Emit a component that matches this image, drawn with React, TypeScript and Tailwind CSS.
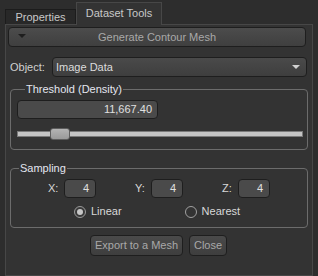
export default function App() {
  return (
    <div className="flex h-[276px] w-[318px] flex-col overflow-hidden bg-[#2d2d2d] text-[11px] leading-[13px] text-[#c4c4c4] [font-family:'Liberation_Sans',Arial,sans-serif]">
      {/* tabs */}
      <div className="flex h-[24px] items-end pl-[5px]">
        <div className="flex h-[15px] w-[71px] items-center justify-center border border-b-0 border-[#1c1c1c] bg-[#282828] text-[#c8c8c8]">
          Properties
        </div>
        <div className="relative z-10 -mb-px flex h-[23px] w-[86px] items-center justify-center border border-b-0 border-[#474747] bg-[#333333] pb-[2px] text-[#c8c8c8]">
          Dataset Tools
        </div>
      </div>

      {/* panel */}
      <div className="ml-[5px] flex w-[308px] flex-1 flex-col border border-[#474747] bg-[#333333] px-[2px] pt-[2px]">
        <button className="relative flex h-[20px] w-[298px] items-center justify-center rounded-[4px] border border-[#1e1e1e] bg-gradient-to-b from-[#4c4c4c] to-[#3f3f3f] text-[#a9a9a9]">
          <span className="absolute left-[9px] top-[6px] h-0 w-0 border-x-[4px] border-t-[4px] border-x-transparent border-t-[#1e1e1e]" />
          Generate Contour Mesh
        </button>

        <div className="mt-[10px] flex items-center pl-[2px]">
          <span className="w-[42px] text-[#d0d0d0]">Object:</span>
          <div className="flex h-[20px] w-[255px] items-center justify-between rounded-[4px] border border-[#1e1e1e] bg-gradient-to-b from-[#4a4a4a] to-[#3e3e3e] pl-[3px] pr-[6px] text-[#dcdcdc]">
            Image Data
            <span className="h-0 w-0 border-x-[4px] border-t-[4px] border-x-transparent border-t-[#d0d0d0]" />
          </div>
        </div>

        {/* threshold */}
        <fieldset className="ml-[2px] mt-[6px] w-[298px] rounded-[4px] border border-[#6c6c6c] pb-[9px] pl-[6px] pr-[4px]">
          <legend className="ml-[8px] px-[1px] leading-[12px] text-[#e4e6f0]">Threshold (Density)</legend>
          <div className="mt-[5px] flex h-[19px] w-[141px] items-center justify-end rounded-[4px] border border-[#1e1e1e] bg-[#4a4a4a] pr-[5px] text-[#e0e0e0]">
            11,667.40
          </div>
          <div className="relative mt-[9px] flex h-[12px] items-center">
            <div className="h-[6px] w-full border border-[#7a7a7a] bg-[#c4c4c4]" />
            <div className="absolute left-[33px] top-0 h-[12px] w-[20px] rounded-[3px] border border-[#5e5e5e] bg-gradient-to-b from-[#b4b4b4] to-[#9a9a9a]" />
          </div>
        </fieldset>

        {/* sampling */}
        <fieldset className="ml-[2px] mt-[12px] w-[298px] rounded-[4px] border border-[#6c6c6c] pb-[9px]">
          <legend className="ml-[8px] px-[1px] leading-[12px] text-[#e4e6f0]">Sampling</legend>
          <div className="mt-[5px] flex items-center gap-[39px] pl-[37px]">
            {["X", "Y", "Z"].map((axis) => (
              <div key={axis} className="flex items-center gap-[6px]">
                <span className="w-[10px] text-[#d8d8d8]">{axis}:</span>
                <div className="flex h-[19px] w-[32px] items-center justify-end rounded-[4px] border border-[#1e1e1e] bg-[#4a4a4a] pr-[6px] text-[#e0e0e0]">
                  4
                </div>
              </div>
            ))}
          </div>
          <div className="mt-[7px] flex items-center pl-[63px]">
            <div className="flex items-center gap-[5px]">
              <span className="flex h-[12px] w-[12px] items-center justify-center rounded-full border border-[#9a9a9a] bg-[#3a3a3a]">
                <span className="h-[6px] w-[6px] rounded-full bg-[#c8c8c8]" />
              </span>
              <span className="text-[#d8d8d8]">Linear</span>
            </div>
            <div className="ml-[63px] flex items-center gap-[5px]">
              <span className="h-[12px] w-[12px] rounded-full border border-[#a0a0a0]" />
              <span className="text-[#d8d8d8]">Nearest</span>
            </div>
          </div>
        </fieldset>

        <div className="mt-[7px] flex justify-center gap-[6px] pr-[1px]">
          <button className="h-[21px] w-[93px] rounded-[4px] border border-[#1e1e1e] bg-gradient-to-b from-[#4a4a4a] to-[#3e3e3e] text-[#a9a9a9]">
            Export to a Mesh
          </button>
          <button className="h-[21px] w-[38px] rounded-[4px] border border-[#1e1e1e] bg-gradient-to-b from-[#4a4a4a] to-[#3e3e3e] text-[#a9a9a9]">
            Close
          </button>
        </div>
      </div>
    </div>
  )
}
